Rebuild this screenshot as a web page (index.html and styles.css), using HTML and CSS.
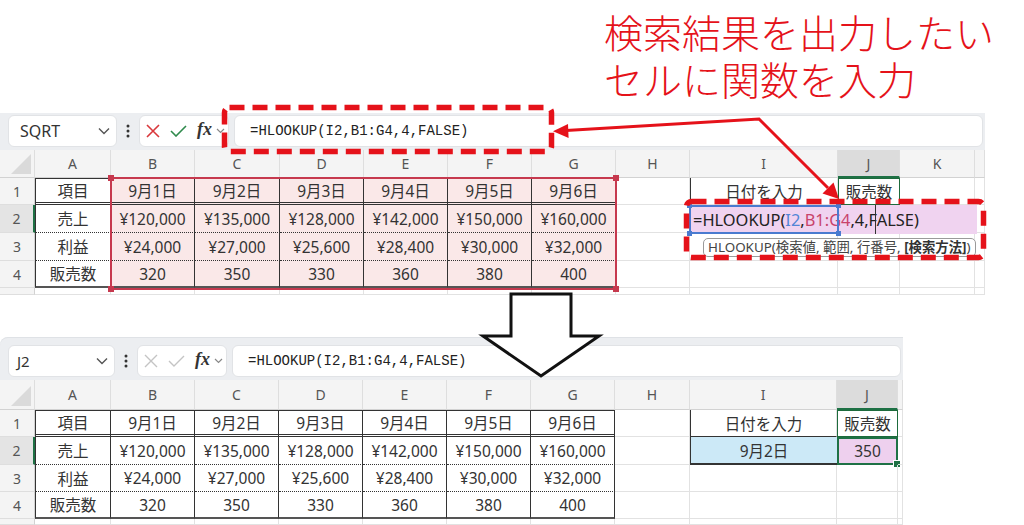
FILE: index.html
```html
<!DOCTYPE html>
<html lang="ja">
<head>
<meta charset="utf-8">
<title>HLOOKUP</title>
<link rel="stylesheet" href="styles.css">
</head>
<body>
<div class="page">
  <div class="title"><div class="tl">検索結果を出力したい</div><div class="tl">セルに関数を入力</div></div>

  <div class="shot shot-top">
    <div class="fbar">
      <div class="box namebox"><span>SQRT</span><svg width="12" height="8" viewBox="0 0 12 8"><path d="M1 1.5L6 6.5L11 1.5" fill="none" stroke="#555" stroke-width="1.4"/></svg></div>
      <div class="vdots"><svg width="4" height="14" viewBox="0 0 4 14"><circle cx="2" cy="2" r="1.5" fill="#333"/><circle cx="2" cy="7" r="1.5" fill="#333"/><circle cx="2" cy="12" r="1.5" fill="#333"/></svg></div>
      <div class="box fbtns">
        <svg class="ic-x" width="14" height="14" viewBox="0 0 14 14"><path d="M1 1L13 13M13 1L1 13" stroke="#d9383c" stroke-width="1.6"/></svg>
        <svg class="ic-ok" width="17" height="12" viewBox="0 0 17 12"><path d="M1 6L6 11L16 1" fill="none" stroke="#2f8a4c" stroke-width="1.6"/></svg>
        <span class="fx">fx</span>
        <svg width="9" height="6" viewBox="0 0 9 6"><path d="M1 1L4.5 4.5L8 1" fill="none" stroke="#888" stroke-width="1.2"/></svg>
      </div>
      <div class="box finput">=HLOOKUP(I2,B1:G4,4,FALSE)</div>
    </div>
    <div class="grid g-top">
      <div class="c h corner"></div><div class="c h">A</div><div class="c h">B</div><div class="c h">C</div><div class="c h">D</div><div class="c h">E</div><div class="c h">F</div><div class="c h">G</div><div class="c h">H</div><div class="c h">I</div><div class="c h hsel">J</div><div class="c h">K</div><div class="c h"></div>

      <div class="c rh">1</div><div class="c t r1 ta">項目</div><div class="c t r1 pk">9月1日</div><div class="c t r1 pk">9月2日</div><div class="c t r1 pk">9月3日</div><div class="c t r1 pk">9月4日</div><div class="c t r1 pk">9月5日</div><div class="c t r1 pk">9月6日</div><div class="c"></div><div class="c i1">日付を入力</div><div class="c j1">販売数</div><div class="c"></div><div class="c"></div>

      <div class="c rh rsel">2</div><div class="c t r2 ta">売上</div><div class="c t r2 pk">¥120,000</div><div class="c t r2 pk">¥135,000</div><div class="c t r2 pk">¥128,000</div><div class="c t r2 pk">¥142,000</div><div class="c t r2 pk">¥150,000</div><div class="c t r2 pk">¥160,000</div><div class="c"></div><div class="c"></div><div class="c"></div><div class="c"></div><div class="c"></div>

      <div class="c rh">3</div><div class="c t r3 ta">利益</div><div class="c t r3 pk">¥24,000</div><div class="c t r3 pk">¥27,000</div><div class="c t r3 pk">¥25,600</div><div class="c t r3 pk">¥28,400</div><div class="c t r3 pk">¥30,000</div><div class="c t r3 pk">¥32,000</div><div class="c"></div><div class="c"></div><div class="c"></div><div class="c"></div><div class="c"></div>

      <div class="c rh">4</div><div class="c t r4 ta">販売数</div><div class="c t r4 pk">320</div><div class="c t r4 pk">350</div><div class="c t r4 pk">330</div><div class="c t r4 pk">360</div><div class="c t r4 pk">380</div><div class="c t r4 pk">400</div><div class="c"></div><div class="c"></div><div class="c"></div><div class="c"></div><div class="c"></div>

      <div class="c rh"></div><div class="c"></div><div class="c"></div><div class="c"></div><div class="c"></div><div class="c"></div><div class="c"></div><div class="c"></div><div class="c"></div><div class="c"></div><div class="c"></div><div class="c"></div><div class="c"></div>
    </div>

    <div class="range-red"><i class="sq sq-tl"></i><i class="sq sq-tr"></i><i class="sq sq-bl"></i><i class="sq sq-br"></i></div>
    <div class="editbox">=HLOOKUP(<span class="ed-i">I2</span>,<span class="ed-r">B1:G4</span>,4,FALSE)</div>
    <div class="range-blue"><i class="bq bq-tl"></i><i class="bq bq-tr"></i><i class="bq bq-bl"></i><i class="bq bq-br"></i></div>
    <div class="ibeam"></div>
    <div class="tip">HLOOKUP(検索値, 範囲, 行番号, <b>[検索方法]</b>)</div>
  </div>

  <div class="shot shot-bottom">
    <div class="fbar">
      <div class="box namebox"><span>J2</span><svg width="12" height="8" viewBox="0 0 12 8"><path d="M1 1.5L6 6.5L11 1.5" fill="none" stroke="#555" stroke-width="1.4"/></svg></div>
      <div class="vdots"><svg width="4" height="14" viewBox="0 0 4 14"><circle cx="2" cy="2" r="1.5" fill="#333"/><circle cx="2" cy="7" r="1.5" fill="#333"/><circle cx="2" cy="12" r="1.5" fill="#333"/></svg></div>
      <div class="box fbtns">
        <svg class="ic-x" width="14" height="14" viewBox="0 0 14 14"><path d="M1 1L13 13M13 1L1 13" stroke="#c4c4c4" stroke-width="1.4"/></svg>
        <svg class="ic-ok" width="17" height="12" viewBox="0 0 17 12"><path d="M1 6L6 11L16 1" fill="none" stroke="#c4c4c4" stroke-width="1.4"/></svg>
        <span class="fx">fx</span>
        <svg width="9" height="6" viewBox="0 0 9 6"><path d="M1 1L4.5 4.5L8 1" fill="none" stroke="#888" stroke-width="1.2"/></svg>
      </div>
      <div class="box finput">=HLOOKUP(I2,B1:G4,4,FALSE)</div>
    </div>
    <div class="grid g-bottom">
      <div class="c h corner"></div><div class="c h">A</div><div class="c h">B</div><div class="c h">C</div><div class="c h">D</div><div class="c h">E</div><div class="c h">F</div><div class="c h">G</div><div class="c h">H</div><div class="c h">I</div><div class="c h hsel">J</div><div class="c h"></div>

      <div class="c rh">1</div><div class="c t r1 ta">項目</div><div class="c t r1">9月1日</div><div class="c t r1">9月2日</div><div class="c t r1">9月3日</div><div class="c t r1">9月4日</div><div class="c t r1">9月5日</div><div class="c t r1">9月6日</div><div class="c"></div><div class="c i1 i1b">日付を入力</div><div class="c j1">販売数</div><div class="c"></div>

      <div class="c rh rsel">2</div><div class="c t r2 ta">売上</div><div class="c t r2">¥120,000</div><div class="c t r2">¥135,000</div><div class="c t r2">¥128,000</div><div class="c t r2">¥142,000</div><div class="c t r2">¥150,000</div><div class="c t r2">¥160,000</div><div class="c"></div><div class="c i2">9月2日</div><div class="c j2">350<i class="fill"></i></div><div class="c"></div>

      <div class="c rh">3</div><div class="c t r3 ta">利益</div><div class="c t r3">¥24,000</div><div class="c t r3">¥27,000</div><div class="c t r3">¥25,600</div><div class="c t r3">¥28,400</div><div class="c t r3">¥30,000</div><div class="c t r3">¥32,000</div><div class="c"></div><div class="c"></div><div class="c"></div><div class="c"></div>

      <div class="c rh">4</div><div class="c t r4 ta">販売数</div><div class="c t r4">320</div><div class="c t r4">350</div><div class="c t r4">330</div><div class="c t r4">360</div><div class="c t r4">380</div><div class="c t r4">400</div><div class="c"></div><div class="c"></div><div class="c"></div><div class="c"></div>

      <div class="c rh"></div><div class="c"></div><div class="c"></div><div class="c"></div><div class="c"></div><div class="c"></div><div class="c"></div><div class="c"></div><div class="c"></div><div class="c"></div><div class="c"></div><div class="c"></div>
    </div>
  </div>

  <svg class="annot" width="1024" height="525" viewBox="0 0 1024 525">
    <rect x="224.5" y="107.5" width="327" height="44" rx="5" fill="none" stroke="#e5121a" stroke-width="5.5" stroke-dasharray="15 8"/>
    <rect x="686.5" y="201.5" width="297" height="56" rx="5" fill="none" stroke="#e5121a" stroke-width="5.5" stroke-dasharray="15 8"/>
    <polyline points="566,130.4 759,119 828,188" fill="none" stroke="#e5121a" stroke-width="3"/>
    <polygon points="553,131.2 568,124 568.6,138" fill="#e5121a"/>
    <polygon points="839,199 833.5,182.5 822.5,193.5" fill="#e5121a"/>
    <polygon points="511,294 571,294 571,336 599,336 541,376 483,336 511,336" fill="#fff" stroke="#111" stroke-width="3"/>
  </svg>
</div>
</body>
</html>
```

FILE: styles.css
```css
html, body {
  margin: 0;
  padding: 0;
  background: #fff;
}

.page {
  position: relative;
  width: 1024px;
  height: 525px;
  overflow: hidden;
  font-family: "Noto Sans", "Noto Sans CJK JP", sans-serif;
  color: #333;
}

.title {
  height: 113px;
  box-sizing: border-box;
  padding: 9px 0 0 604px;
  font-family: "Noto Sans CJK JP", sans-serif;
  font-weight: 200;
  font-size: 39px;
  color: #e5121a;
  white-space: nowrap;
}

.tl {
  height: 47px;
  line-height: 44px;
}

.shot {
  position: relative;
}

.shot-top {
  width: 985px;
}

.shot-bottom {
  width: 903px;
  margin-top: 42px;
}

/* formula bar */
.fbar {
  display: flex;
  align-items: center;
  background: #eceef1;
  padding: 2px 2px 3px 8px;
}

.shot-bottom .fbar {
  padding-top: 8px;
  border-top-left-radius: 8px;
  box-shadow: inset 0 1px 0 #dfe2e6;
}

.box {
  height: 32px;
  box-sizing: border-box;
  background: #fff;
  border: 1px solid #e1e3e6;
  border-radius: 6px;
  display: flex;
  align-items: center;
}

.namebox {
  width: 109px;
  justify-content: space-between;
  padding: 0 6px 0 11px;
  font-size: 16px;
  color: #333;
}

.shot-bottom .namebox {
  width: 107px;
  padding-left: 8px;
  font-size: 15px;
}

.vdots {
  width: 22px;
  display: flex;
  justify-content: center;
}

.fbtns {
  width: 90px;
  padding-left: 6px;
}

.ic-x {
  margin-right: 10px;
}

.ic-ok {
  margin-right: 10px;
}

.fx {
  font-family: "Liberation Serif", serif;
  font-style: italic;
  font-weight: bold;
  font-size: 18px;
  color: #333;
  margin-right: 4px;
  margin-top: -3px;
}

.finput {
  flex: 1;
  margin-left: 5px;
  padding-left: 15px;
  font-family: "Liberation Mono", monospace;
  font-size: 14px;
  color: #222;
}

/* grid */
.grid {
  display: grid;
}

.g-top {
  grid-template-columns: 35px 76px 84px 85px 84px 84px 84px 84px 74px 148px 62px 75px 1fr;
  grid-template-rows: 28px 27px 28px 28px 27px 7px;
}

.g-bottom {
  grid-template-columns: 35px 76px 84px 84px 84px 84px 84px 84px 75px 147px 61px 1fr;
  grid-template-rows: 30px 27px 28px 27px 27px 6px;
}

.c {
  position: relative;
  box-sizing: border-box;
  display: flex;
  align-items: center;
  justify-content: center;
  border-right: 1px solid #e2e2e2;
  border-bottom: 1px solid #e2e2e2;
  font-size: 15.5px;
  color: #333;
  white-space: nowrap;
  overflow: hidden;
}

.h {
  background: #f4f4f4;
  color: #555;
  font-size: 14px;
  border-right-color: #dedede;
  border-bottom-color: #d2d2d2;
}

.rh {
  background: #f4f4f4;
  color: #555;
  font-size: 14px;
  border-right-color: #d2d2d2;
  border-bottom-color: #dedede;
}

.corner::after {
  content: "";
  position: absolute;
  right: 3px;
  bottom: 3px;
  width: 0;
  height: 0;
  border-left: 20px solid transparent;
  border-bottom: 20px solid #dadada;
}

.hsel {
  background: #dcdcdc;
  border-bottom: 2px solid #1e7145;
}

.rsel {
  background: #e4e4e4;
  border-right: 2px solid #1e7145;
}

/* table borders */
.t {
  border-right: 1px solid #333;
}

.ta {
  border-left: 1px solid #333;
}

.r1 {
  border-top: 1px solid #333;
  border-bottom: 3px double #333;
}

.r2, .r3 {
  border-bottom: 1px dotted #333;
}

.r4 {
  border-bottom: 2px solid #555;
}

.pk {
  background: #fae8e8;
}

.i1 {
  border-left: 1px solid #333;
}

.i1b {
  border-bottom: 1px solid #333;
}

.j1 {
  border: 1px solid #1d6b3c;
}

.i2 {
  background: #cce9f7;
  border-left: 1px solid #333;
  border-bottom: 2px solid #333;
  border-right: none;
}

.j2 {
  background: #eed0ee;
  border: 2px solid #1e7145;
  overflow: visible;
}

.fill {
  position: absolute;
  right: -5px;
  bottom: -5px;
  width: 6px;
  height: 6px;
  background: #1e7145;
  border: 1px solid #fff;
}

/* overlays on top screenshot */
.range-red {
  position: absolute;
  left: 110px;
  top: 64px;
  width: 507px;
  height: 113px;
  box-sizing: border-box;
  border: 2px solid #c6394e;
  pointer-events: none;
}

.sq {
  position: absolute;
  width: 6px;
  height: 6px;
  background: #c6394e;
}

.sq-tl { left: -4px; top: -4px; }
.sq-tr { right: -4px; top: -4px; }
.sq-bl { left: -4px; bottom: -4px; }
.sq-br { right: -4px; bottom: -4px; }

.editbox {
  position: absolute;
  left: 689px;
  top: 92px;
  width: 288px;
  height: 29px;
  box-sizing: border-box;
  padding-left: 4px;
  background: #f0d3f0;
  font-family: "Noto Sans", sans-serif;
  font-size: 16.4px;
  line-height: 29px;
  color: #222;
  white-space: nowrap;
}

.ed-i {
  color: #5285d6;
}

.ed-r {
  color: #c8436b;
}

.range-blue {
  position: absolute;
  left: 689px;
  top: 92px;
  width: 150px;
  height: 29px;
  box-sizing: border-box;
  border: 2px solid #4a7bd0;
}

.bq {
  position: absolute;
  width: 5px;
  height: 5px;
  background: #4a7bd0;
}

.bq-tl { left: -4px; top: -4px; }
.bq-tr { right: -4px; top: -4px; }
.bq-bl { left: -4px; bottom: -4px; }
.bq-br { right: -4px; bottom: -4px; }

.ibeam {
  position: absolute;
  left: 875px;
  top: 92px;
  width: 1px;
  height: 29px;
  background: #333;
}

.tip {
  position: absolute;
  left: 703px;
  top: 125px;
  height: 19px;
  box-sizing: border-box;
  padding: 0 4px;
  background: #fff;
  border: 1px solid #9a9a9a;
  border-radius: 5px;
  font-family: "Noto Sans", "Noto Sans CJK JP", sans-serif;
  font-size: 13.4px;
  line-height: 17px;
  color: #444;
  white-space: nowrap;
}

.tip b {
  font-weight: 700;
  color: #333;
}

.annot {
  position: absolute;
  left: 0;
  top: 0;
  pointer-events: none;
}
```
